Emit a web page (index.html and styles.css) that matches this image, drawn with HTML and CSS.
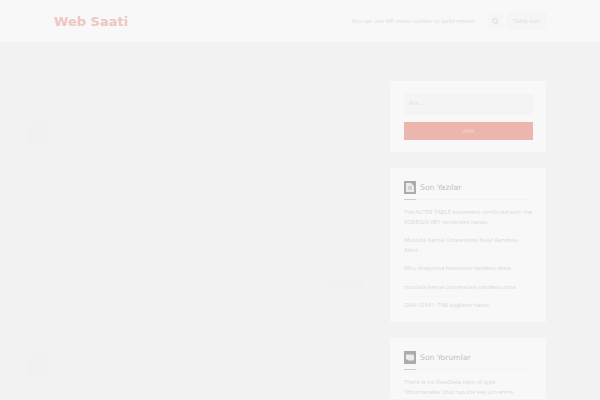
FILE: index.html
```html
<!DOCTYPE html>
<html lang="tr">
<head>
<meta charset="utf-8">
<title>Web Saati</title>
<link rel="stylesheet" href="styles.css">
</head>
<body>
<header class="site-header">
  <a class="logo">Web Saati</a>
  <nav class="menu-note">You can use WP menu builder to build menus</nav>
  <div class="search-btn">
    <svg width="7" height="7" viewBox="0 0 8 8"><circle cx="3.4" cy="3.4" r="2.6" fill="none" stroke="#d8d8d8" stroke-width="1"/><path d="M5.3 5.3L7.6 7.6" stroke="#d8d8d8" stroke-width="1"/></svg>
  </div>
  <div class="header-cta">Takip etin</div>
</header>
<div class="page">
  <main class="content">
    <div class="post-row first">
      <div class="avatar"></div>
    </div>
    <div class="read-row"><div class="read-more"></div></div>
    <div class="post-row second">
      <div class="avatar"></div>
    </div>
  </main>
  <aside class="sidebar">
    <section class="card search-card">
      <div class="search-input">Ara ...</div>
      <div class="search-submit">ARA</div>
    </section>
    <section class="card posts-card">
      <h3 class="widget-title">
        <span class="widget-icon"><svg width="8" height="9" viewBox="0 0 8 9"><path d="M0 0H5L8 3V9H0Z" fill="#ececec"/><path d="M2 4H6M2 6H6" stroke="#acacac" stroke-width="0.8"/></svg></span>
        Son Yazılar
      </h3>
      <ul class="post-list">
        <li>The ALTER TABLE statement conflicted with the FOREIGN KEY constraint hatası</li>
        <li>Mustafa Kemal Üniversitesi Nasıl Randevu Alınır</li>
        <li>Mku Araştırma hastanesi randevu alma</li>
        <li>mustafa kemal üniversitesi randevu alma</li>
        <li>ORA-12541: TNS bağlantı hatası</li>
      </ul>
    </section>
    <section class="card comments-card">
      <h3 class="widget-title">
        <span class="widget-icon"><svg width="10" height="9" viewBox="0 0 10 9"><path d="M1 1.5H7.5Q9 1.5 9 3V6Q9 7.5 7.5 7.5H3.5L1 6Z" fill="#ececec"/></svg></span>
        Son Yorumlar
      </h3>
      <p class="comment">There is no ViewData item of type 'IEnumerable' that has the key için emre</p>
    </section>
  </aside>
</div>
</body>
</html>
```
FILE: styles.css
```css
* { box-sizing: border-box; }
html, body { margin: 0; height: 400px; overflow: hidden; }
body { background: #f2f2f2; font-family: "Open Sans", sans-serif; color: #d6d6d6; }
.site-header { height: 42px; background: #f8f8f8; display: flex; align-items: center; padding: 0 53px 0 54px; box-shadow: 0 1px 3px #f0f0f0; }
.logo { font-family: "DejaVu Sans", sans-serif; font-size: 13px; font-weight: 700; color: #edc6c1; }
.menu-note { margin-left: auto; font-size: 5.85px; color: #dcdcdc; }
.search-btn { width: 15px; height: 15px; margin-left: 13px; display: flex; align-items: center; justify-content: center; background: #f6f6f6; }
.header-cta { width: 40px; height: 17px; margin-left: 4px; background: #f5f5f5; font-size: 6px; color: #e0e0e0; display: flex; align-items: center; padding-left: 6px; }
.page { display: flex; padding: 39px 54px 0 27px; gap: 26px; }
.content { width: 337px; flex: none; }
.post-row { display: flex; }
.post-row.first { padding-top: 40px; }
.avatar { width: 24px; height: 23px; background: #f1f1f1; box-shadow: 0 0 0 1px #f3f3f3; }
.read-row { display: flex; justify-content: flex-end; margin-top: 133px; }
.read-more { width: 36px; height: 15px; background: #f1f1f1; box-shadow: 0 0 0 1px #f3f3f3; }
.post-row.second { margin-top: 62px; }
.sidebar { width: 156px; flex: none; display: flex; flex-direction: column; gap: 16px; }
.card { background: #f8f8f8; padding: 13px 13px 0 14px; }
.search-card { height: 71px; }
.posts-card { padding-bottom: 3.5px; }
.comments-card { padding-bottom: 2px; }
.search-input { height: 21px; background: #f4f4f4; font-size: 6px; color: #e0e0e0; padding: 5px 5px; }
.search-submit { height: 18px; margin-top: 7px; background: #ecb6ae; color: #f3d9d5; font-size: 6px; text-align: center; line-height: 18px; }
.widget-title { margin: 0 0 8px; display: flex; align-items: center; gap: 4px; font-family: "DejaVu Sans", sans-serif; font-size: 7.7px; font-weight: 400; color: #c2c2c2; height: 19px; border-bottom: 1px solid #f4f4f4; position: relative; padding-bottom: 6px; }
.widget-title::after { content: ""; position: absolute; left: 0; bottom: -1px; width: 12px; height: 1px; background: #cfcfcf; }
.widget-icon { width: 12px; height: 13px; background: #acacac; display: flex; align-items: center; justify-content: center; }
.post-list { list-style: none; margin: 0; padding: 0; font-size: 5.85px; line-height: 9.5px; color: #d8d8d8; }
.post-list li { padding-bottom: 4px; margin-bottom: 4px; border-bottom: 1px solid #f6f6f6; }
.post-list li:last-child { border: 0; }
.comment { margin: 0; font-size: 5.85px; line-height: 9.5px; color: #d8d8d8; }
```
